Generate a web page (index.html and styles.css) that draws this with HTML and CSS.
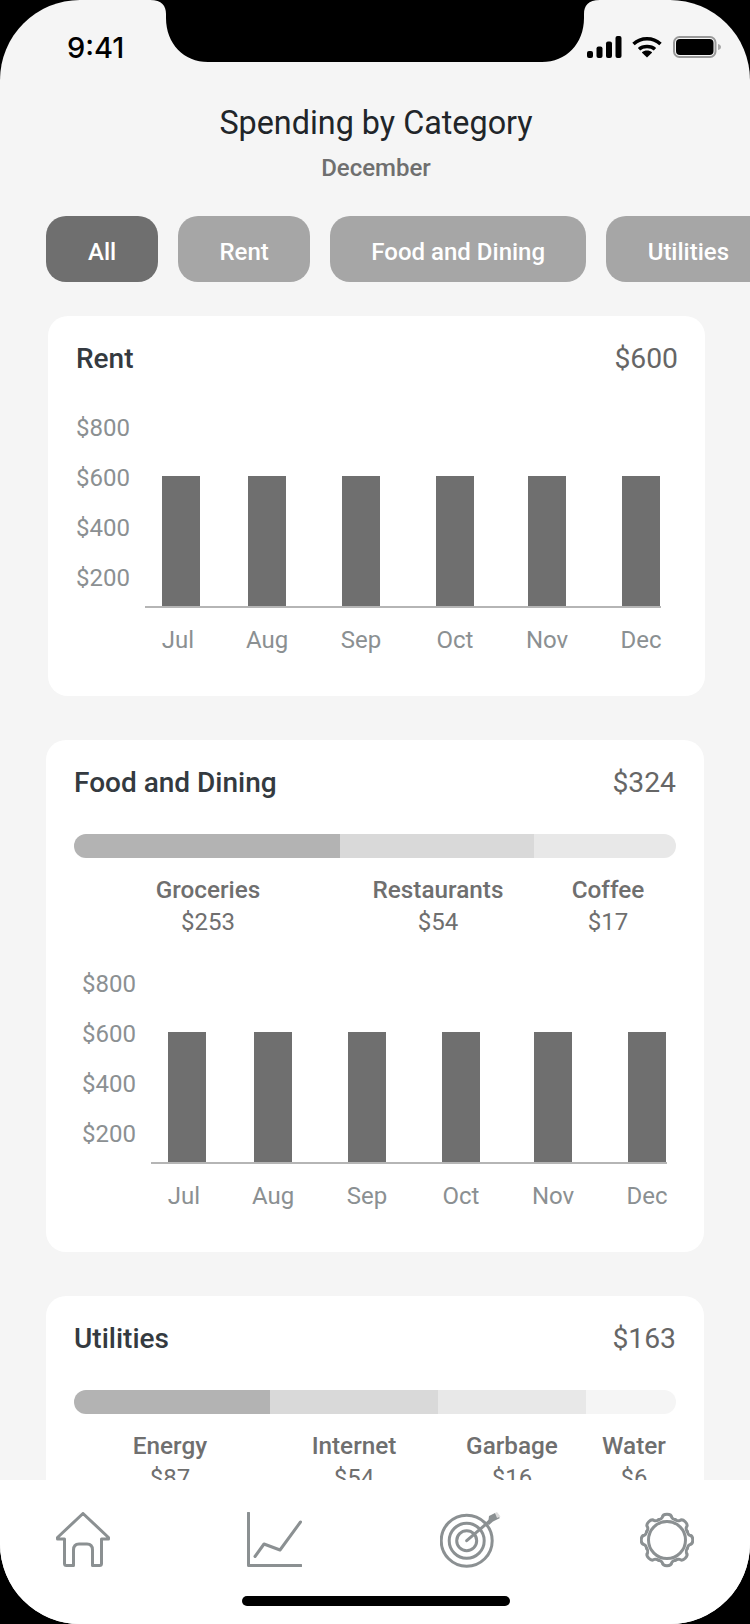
FILE: index.html
```html
<!DOCTYPE html>
<html lang="en">
<head>
  <meta charset="UTF-8" />
  <meta name="viewport" content="width=device-width, initial-scale=1.0" />
  <title>Spending by Category</title>
  <link rel="stylesheet" href="styles.css">
</head>
<body>
  <div class="screen">
    <svg class="notch" viewBox="0 0 450 62" width="450" height="62">
      <path d="M0 0H450C438 0 434 6 434 14V18C434 44 416 62 392 62H58C34 62 16 44 16 18V14C16 6 12 0 0 0Z" />
    </svg>

    <div class="status-bar">
      <span class="time">9:41</span>
      <div class="status-icons">
        <svg width="35" height="22" viewBox="0 0 35 22">
          <rect x="0" y="15" width="6" height="7" rx="2" />
          <rect x="9.500" y="10.500" width="6" height="11.500" rx="2" />
          <rect x="19" y="5.500" width="6" height="16.500" rx="2" />
          <rect x="28.500" y="0" width="6" height="22" rx="2" />
        </svg>
        <svg class="wifi" width="30" height="22" viewBox="0 0 30 22">
          <path class="wifi-arc" d="M1.500 8C9 1 21 1 28.500 8" />
          <path class="wifi-arc" d="M7 13.200C11 9.500 19 9.500 23 13.200" />
          <path d="M15 21.500L9.800 16.400C12.800 14 17.200 14 20.200 16.400Z" />
        </svg>
        <svg width="48" height="22" viewBox="0 0 48 22">
          <rect class="battery-case" x="1" y="1" width="41.500" height="20" rx="5.500" />
          <rect x="3" y="3" width="37.500" height="16" rx="4" />
          <path class="battery-cap" d="M45 8C47 8.500 48 9.500 48 11C48 12.500 47 13.500 45 14Z" />
        </svg>
      </div>
    </div>

    <div class="content">
      <header class="page-head">
        <h1>Spending by Category</h1>
        <p>December</p>
      </header>

      <nav class="pills">
        <a class="pill pill-active">All</a>
        <a class="pill">Rent</a>
        <a class="pill">Food and Dining</a>
        <a class="pill">Utilities</a>
      </nav>

      <section class="card card-rent">
        <div class="card-head">
          <h2>Rent</h2>
          <span class="card-total">$600</span>
        </div>
        <div class="chart">
          <div class="y-axis">
            <span>$800</span>
            <span>$600</span>
            <span>$400</span>
            <span>$200</span>
          </div>
          <div class="plot">
            <div class="bars month-grid">
              <div class="bar"></div><div class="bar"></div><div class="bar"></div>
              <div class="bar"></div><div class="bar"></div><div class="bar"></div>
            </div>
            <div class="months month-grid">
              <span>Jul</span><span>Aug</span><span>Sep</span>
              <span>Oct</span><span>Nov</span><span>Dec</span>
            </div>
          </div>
        </div>
      </section>

      <section class="card">
        <div class="card-head">
          <h2>Food and Dining</h2>
          <span class="card-total">$324</span>
        </div>
        <div class="split-bar">
          <div class="seg seg-1" style="width: 266px"></div>
          <div class="seg seg-2" style="width: 194px"></div>
          <div class="seg seg-3" style="width: 142px"></div>
        </div>
        <div class="split-labels">
          <div class="split-label" style="width: 268px"><strong>Groceries</strong><span>$253</span></div>
          <div class="split-label" style="width: 192px"><strong>Restaurants</strong><span>$54</span></div>
          <div class="split-label" style="width: 142px"><strong>Coffee</strong><span>$17</span></div>
        </div>
        <div class="chart chart-inset">
          <div class="y-axis">
            <span>$800</span>
            <span>$600</span>
            <span>$400</span>
            <span>$200</span>
          </div>
          <div class="plot">
            <div class="bars month-grid">
              <div class="bar"></div><div class="bar"></div><div class="bar"></div>
              <div class="bar"></div><div class="bar"></div><div class="bar"></div>
            </div>
            <div class="months month-grid">
              <span>Jul</span><span>Aug</span><span>Sep</span>
              <span>Oct</span><span>Nov</span><span>Dec</span>
            </div>
          </div>
        </div>
      </section>

      <section class="card">
        <div class="card-head">
          <h2>Utilities</h2>
          <span class="card-total">$163</span>
        </div>
        <div class="split-bar">
          <div class="seg seg-1" style="width: 196px"></div>
          <div class="seg seg-2" style="width: 168px"></div>
          <div class="seg seg-3" style="width: 148px"></div>
          <div class="seg seg-4" style="width: 90px"></div>
        </div>
        <div class="split-labels">
          <div class="split-label" style="width: 192px"><strong>Energy</strong><span>$87</span></div>
          <div class="split-label" style="width: 176px"><strong>Internet</strong><span>$54</span></div>
          <div class="split-label" style="width: 140px"><strong>Garbage</strong><span>$16</span></div>
          <div class="split-label" style="width: 98px"><strong>Water</strong><span>$6</span></div>
        </div>
      </section>
    </div>

    <footer class="tab-bar">
      <div class="tabs">
        <svg width="54" height="56" viewBox="0 0 54 56">
          <path d="M27 1.500L1.500 25.500V27H8.500V51.500Q8.500 53.500 10.500 53.500H17.500V38Q17.500 32 23 32H31Q36.500 32 36.500 38V53.500H43.500Q45.500 53.500 45.500 51.500V27H52.500V25.500Z" />
        </svg>
        <svg width="55" height="56" viewBox="0 0 55 56">
          <path d="M1.500 1V53.500H54" />
          <path d="M8 44.500L17 32L33 38L53.500 10" />
        </svg>
        <svg width="61" height="56" viewBox="0 0 61 56">
          <circle cx="26.700" cy="28.700" r="25.500" />
          <circle cx="26.700" cy="28.700" r="17.500" />
          <circle cx="26.700" cy="28.700" r="10" />
          <path d="M26.700 28.700L52 7" />
          <path class="target-tip" d="M48 12L49 4L55 1L60 6L53 9.500L49 13Z" />
          <path class="target-nock" d="M55 1L57 0L60.500 4.500L57 6Z" />
        </svg>
        <svg width="54" height="56" viewBox="0 0 54 56">
          <circle cx="27" cy="28" r="18.500" />
          <g transform="translate(27 28)">
            <path id="gear-tooth" d="M-8.420-20.320Q-5.600-20.800-4.700-22.700C-4.400-25.600-2.500-25.800 0-25.800C2.500-25.800 4.400-25.600 4.700-22.700Q5.600-20.800 8.420-20.320" />
            <use href="#gear-tooth" transform="rotate(45)" />
            <use href="#gear-tooth" transform="rotate(90)" />
            <use href="#gear-tooth" transform="rotate(135)" />
            <use href="#gear-tooth" transform="rotate(180)" />
            <use href="#gear-tooth" transform="rotate(225)" />
            <use href="#gear-tooth" transform="rotate(270)" />
            <use href="#gear-tooth" transform="rotate(315)" />
          </g>
        </svg>
      </div>
      <div class="home-indicator"></div>
    </footer>
  </div>
</body>
</html>
```

FILE: styles.css
```css
* { box-sizing: border-box; }
body {
  margin: 0;
  background: #000;
  font-family: Roboto, "Liberation Sans", sans-serif;
}
h1, h2, p { margin: 0; }

.screen {
  position: relative;
  display: flex;
  flex-direction: column;
  width: 750px;
  height: 1624px;
  background: #f5f5f5;
  border-radius: 80px;
  overflow: hidden;
}
.notch {
  position: absolute;
  top: 0;
  left: 150px;
  fill: #000;
}

.status-bar {
  display: flex;
  flex: none;
  justify-content: space-between;
  align-items: center;
  height: 93px;
  padding: 0 29px 0 67px;
}
.time {
  padding-top: 2px;
  font-family: Inter, Roboto, sans-serif;
  font-size: 29px;
  font-weight: 500;
  color: #000;
}
.status-icons {
  display: flex;
  gap: 10px;
}
.status-icons svg { display: block; fill: #000; }
.status-icons .wifi { margin-right: 1px; }
.wifi-arc { fill: none; stroke: #000; stroke-width: 3.5; }
.battery-case { fill: none; stroke: #999; stroke-width: 2; }
.battery-cap { fill: #aaa; }

.content {
  flex: 1;
  overflow: hidden;
}
.page-head {
  padding: 11px 0 0 2px;
  text-align: center;
}
.page-head h1 {
  font-size: 32.350px;
  font-weight: 400;
  line-height: 38px;
  color: #212529;
}
.page-head p {
  margin-top: 12px;
  font-size: 24px;
  font-weight: 500;
  line-height: 28px;
  color: #6f6f6f;
}

.pills {
  display: flex;
  gap: 20px;
  margin-top: 34px;
  padding-left: 46px;
}
.pill {
  display: flex;
  flex: none;
  align-items: center;
  height: 66px;
  padding: 6px 41.300px 0;
  background: #a6a6a6;
  border-radius: 20px;
  font-size: 24px;
  font-weight: 500;
  color: #fff;
}
.pill-active {
  padding: 6px 42px 0;
  background: #6f6f6f;
}

.card {
  width: 658px;
  margin: 44px 0 0 46px;
  padding: 25px 28px 41px;
  background: #fff;
  border-radius: 20px;
}
.card-rent {
  width: 657px;
  margin: 34px 0 0 48px;
  padding-right: 27px;
}
.card-head {
  display: flex;
  justify-content: space-between;
  align-items: center;
  height: 34px;
}
.card-head h2 {
  font-size: 28px;
  font-weight: 500;
  color: #343a40;
}
.card-total {
  font-size: 28.300px;
  font-weight: 400;
  color: #666;
}

.split-bar {
  display: flex;
  width: 602px;
  height: 24px;
  margin-top: 35px;
  border-radius: 12px;
  overflow: hidden;
}
.seg-1 { background: #b3b3b3; }
.seg-2 { background: #d9d9d9; }
.seg-3 { background: #e8e8e8; }
.seg-4 { background: #f5f5f5; }

.split-labels {
  display: flex;
  margin-top: 17px;
}
.split-label {
  display: flex;
  flex: none;
  flex-direction: column;
  align-items: center;
  font-size: 24px;
  color: #6f6f6f;
}
.split-label:last-child { padding-left: 6px; }
.split-label strong {
  font-size: 24.300px;
  font-weight: 500;
  line-height: 30px;
}
.split-label span {
  margin-top: 2px;
  line-height: 30px;
}

.chart {
  display: flex;
  margin-top: 27px;
  color: #8b9092;
  font-size: 24px;
}
.chart-inset {
  margin: 21px 0 0 8px;
}
.y-axis {
  display: flex;
  flex-direction: column;
  width: 69px;
  padding-top: 1px;
  line-height: 50px;
}
.plot {
  display: flex;
  flex-direction: column;
  width: 516px;
}
.month-grid {
  display: grid;
  grid-template-columns: 86px 94px 94px 92px 94px 38px;
  padding-left: 17px;
}
.bars {
  align-items: end;
  height: 206px;
  border-bottom: 2px solid #b5b5b5;
}
.bar {
  width: 38px;
  height: 130px;
  background: #6f6f6f;
}
.months {
  padding-top: 17px;
  line-height: 30px;
}
.months span {
  display: flex;
  justify-content: center;
  width: 38px;
  white-space: nowrap;
}
.months span:first-child { margin-left: -3px; }

.tab-bar {
  flex: none;
  height: 144px;
  padding: 32px 0 0 56px;
  background: #fff;
}
.tabs {
  display: grid;
  grid-template-columns: 191px 193px 200px 54px;
  height: 56px;
}
.tabs svg {
  display: block;
  fill: none;
  stroke: #8b9092;
  stroke-width: 3;
  stroke-linejoin: round;
  stroke-linecap: round;
}
.tabs .target-tip { fill: #8b9092; stroke: none; }
.tabs .target-nock { fill: #dcdcdc; stroke: none; }
.home-indicator {
  width: 268px;
  height: 10px;
  margin: 28px 0 0 186px;
  background: #000;
  border-radius: 5px;
}
```
